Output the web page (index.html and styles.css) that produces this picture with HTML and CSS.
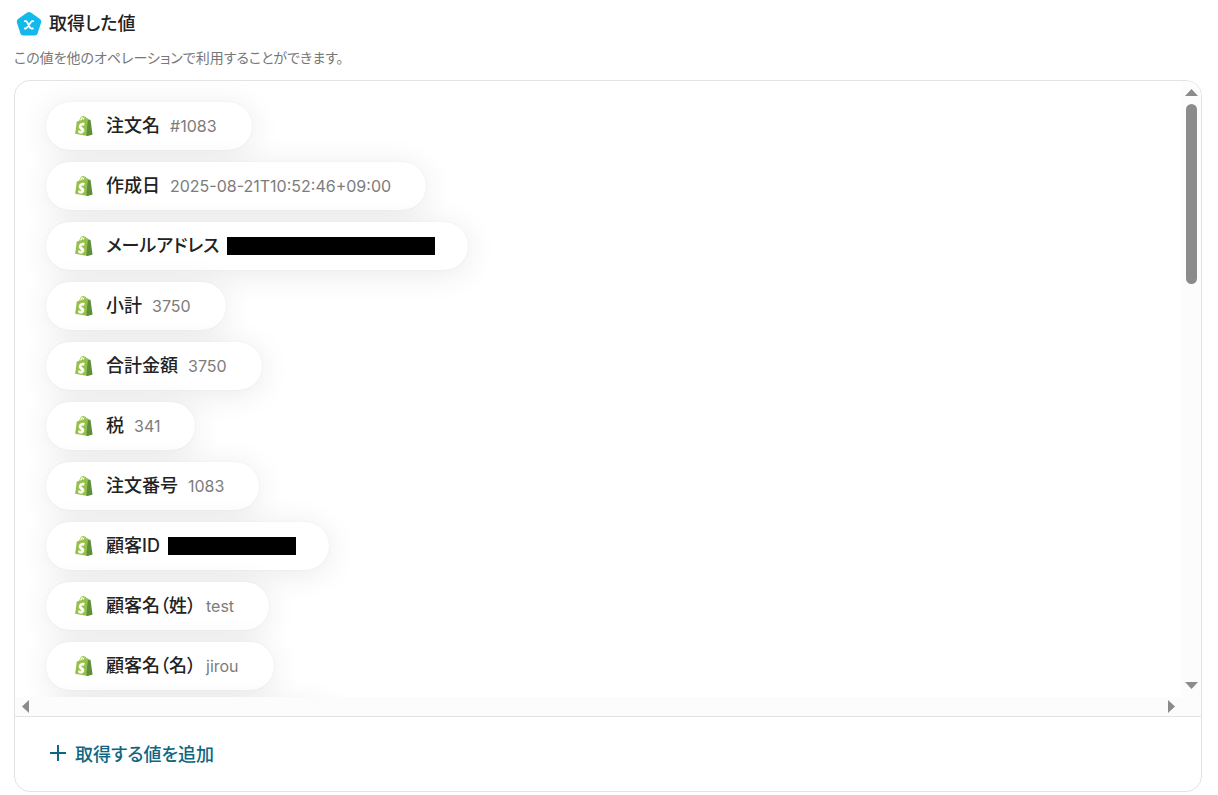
FILE: index.html
```html
<!DOCTYPE html>
<html lang="ja">
<head>
<meta charset="utf-8">
<meta name="viewport" content="width=device-width, initial-scale=1">
<title>取得した値</title>
<link rel="stylesheet" href="styles.css">
</head>
<body>
<svg class="defs" aria-hidden="true">
  <symbol id="bag" viewBox="0 0 110 125">
    <path fill="#95bf47" d="M74.7 14.8s-1.4.4-3.7 1.1c-.4-1.3-1-2.8-1.8-4.4-2.6-5-6.5-7.7-11.1-7.7-.3 0-.6 0-1 .1-.1-.2-.3-.3-.4-.5-2-2.2-4.6-3.2-7.7-3.1-6 .2-12 4.500-16.800 12.200-3.400 5.400-6 12.200-6.800 17.500-6.900 2.100-11.700 3.600-11.800 3.700-3.500 1.100-3.600 1.200-4 4.500C9.300 40.700 0 111.500 0 111.500l78.100 13.100V14.600c-1 0-2.400 0-3.400.2zM57.200 20.200c-4 1.200-8.400 2.600-12.700 3.900 1.200-4.700 3.600-9.400 6.400-12.500 1.100-1.100 2.600-2.400 4.300-3.200 1.700 3.600 2.100 8.500 2 11.800zM49.100 4.300c1.400 0 2.600.3 3.600.9-1.600.8-3.200 2.100-4.700 3.600-3.800 4.100-6.700 10.500-7.900 16.600-3.600 1.100-7.200 2.200-10.500 3.200C31.700 18.800 39.800 4.600 49.100 4.300z"/>
    <path fill="#5e8e3e" d="M70 123l8.100 1.500 31.400-8.400S96 24.800 95.900 24.200c-.1-.6-.6-1-1.100-1s-9.300-.2-9.300-.2-5.400-5.200-7.400-7.200z"/>
    <path fill="#fff" d="M57.200 45.300l-3.800 14.300s-4.300-1.900-9.300-1.600c-7.500.5-7.500 5.200-7.500 6.400.4 6.400 17.300 7.800 18.300 22.900.7 11.900-6.300 20-16.400 20.600-12.200.8-18.900-6.400-18.900-6.400l2.600-11s6.700 5.100 12.100 4.700c3.500-.2 4.800-3.100 4.700-5.100-.5-8.400-14.300-7.900-15.200-21.700-.7-11.600 6.900-23.400 23.700-24.400 6.400-.5 9.700 1.300 9.700 1.300z" stroke="#fff" stroke-width="4"/>
  </symbol>
</svg>
<main class="page">
  <header class="head">
    <h1 class="title">
      <svg class="title-icon" viewBox="0 0 26 26" aria-hidden="true">
        <path fill="#12b9eb" d="M11.200 1.500q1.800-1.100 3.600 0l9.200 6.600q1.700 1.300 1.100 3.400l-3.500 11q-.7 2.100-2.900 2.100H7.300q-2.200 0-2.900-2.100L.9 11.500Q.3 9.400 2 8.100z"/>
        <path fill="none" stroke="#fff" stroke-width="1.800" stroke-linecap="round" stroke-linejoin="round" d="M8.800 10.200h1q.8 0 1.200.8l3 5.600q.5.9 1.300.9h1.500M17.200 10.200h-.7q-.8 0-1.400.8l-4.100 5.600q-.6.9-1.500.9h-.7"/>
      </svg>
      取得した値
    </h1>
    <p class="lead">この値を他のオペレーションで利用することができます。</p>
  </header>
  <section class="panel">
    <div class="scroller">
      <ul class="list">
        <li class="pill"><svg class="bag"><use href="#bag"/></svg><span class="label">注文名</span><span class="value">#1083</span></li>
        <li class="pill"><svg class="bag"><use href="#bag"/></svg><span class="label">作成日</span><span class="value">2025-08-21T10:52:46+09:00</span></li>
        <li class="pill"><svg class="bag"><use href="#bag"/></svg><span class="label">メールアドレス</span><span class="mask mask-mail"></span></li>
        <li class="pill"><svg class="bag"><use href="#bag"/></svg><span class="label">小計</span><span class="value">3750</span></li>
        <li class="pill"><svg class="bag"><use href="#bag"/></svg><span class="label">合計金額</span><span class="value">3750</span></li>
        <li class="pill"><svg class="bag"><use href="#bag"/></svg><span class="label">税</span><span class="value">341</span></li>
        <li class="pill"><svg class="bag"><use href="#bag"/></svg><span class="label">注文番号</span><span class="value">1083</span></li>
        <li class="pill"><svg class="bag"><use href="#bag"/></svg><span class="label">顧客ID</span><span class="mask mask-id"></span></li>
        <li class="pill"><svg class="bag"><use href="#bag"/></svg><span class="label">顧客名（姓）</span><span class="value">test</span></li>
        <li class="pill"><svg class="bag"><use href="#bag"/></svg><span class="label">顧客名（名）</span><span class="value">jirou</span></li>
        <li class="pill pill-next"></li>
      </ul>
      <div class="bar-v" aria-hidden="true">
        <svg class="arrow-v" viewBox="0 0 13 7"><path d="M6.500 0L13 7H0z"/></svg>
        <div class="track"><div class="thumb"></div></div>
        <svg class="arrow-v" viewBox="0 0 13 7"><path d="M0 0h13L6.500 7z"/></svg>
      </div>
      <div class="bar-h" aria-hidden="true">
        <svg class="arrow-h" viewBox="0 0 7 13"><path d="M7 0v13L0 6.500z"/></svg>
        <svg class="arrow-h" viewBox="0 0 7 13"><path d="M0 0l7 6.500L0 13z"/></svg>
      </div>
    </div>
    <footer class="foot">
      <button class="add" type="button">
        <svg class="plus" viewBox="0 0 16 16" aria-hidden="true"><path d="M8 0v16M0 8h16"/></svg>
        取得する値を追加
      </button>
    </footer>
  </section>
</main>
</body>
</html>
```
FILE: styles.css
```css
* {
  box-sizing: border-box;
}

body {
  margin: 0;
  background: #fff;
  color: #222;
  font-family: Inter, "Noto Sans CJK JP", sans-serif;
  font-feature-settings: "palt";
}

.defs {
  display: none;
}

.page {
  display: flex;
  flex-direction: column;
  height: 100vh;
  padding: 8px 16px 3px 14px;
}

.head {
  padding-bottom: 12px;
}

.title {
  display: flex;
  align-items: center;
  gap: 7px;
  margin: 0;
  padding-left: 2px;
  font-size: 18px;
  font-weight: 500;
  line-height: 32px;
}

.title-icon {
  width: 26px;
  height: 26px;
}

.lead {
  margin: 8px 0 0;
  color: #777;
  font-size: 14px;
  line-height: 20px;
}

.panel {
  display: flex;
  flex: 1;
  flex-direction: column;
  min-height: 0;
  overflow: hidden;
  border: 1px solid #e3e3e3;
  border-radius: 16px;
}

.scroller {
  display: grid;
  flex: 1;
  grid-template: minmax(0, 1fr) 19px / minmax(0, 1fr) 19px;
  min-height: 0;
}

.list {
  display: flex;
  flex-direction: column;
  align-items: flex-start;
  gap: 12px;
  margin: 0;
  padding: 21px 31px 0;
  overflow: hidden;
  list-style: none;
}

.pill {
  display: flex;
  flex: none;
  align-items: center;
  height: 48px;
  padding: 0 35px 0 29px;
  border-radius: 24px;
  background: #fff;
  box-shadow: 0 4px 32px rgba(0, 0, 0, 0.09), 0 0 2px rgba(0, 0, 0, 0.06);
  white-space: nowrap;
}

.pill-next {
  width: 290px;
}

.bag {
  width: 18px;
  height: 20px;
  margin-right: 13px;
}

.label {
  font-size: 18px;
  font-weight: 500;
  line-height: 24px;
}

.value {
  margin-left: 10px;
  color: #7c7c7c;
  font-size: 16px;
  line-height: 24px;
}

.mask {
  height: 18px;
  margin: 0 -2px 0 8px;
  background: #000;
}

.mask-mail {
  width: 208px;
}

.mask-id {
  width: 128px;
}

.bar-v {
  display: flex;
  grid-row: 1;
  grid-column: 2;
  flex-direction: column;
  align-items: center;
  gap: 8px;
  padding: 8px 0;
  background: #fcfcfc;
}

.bar-h {
  display: flex;
  grid-row: 2;
  grid-column: 1 / 3;
  align-items: center;
  justify-content: space-between;
  padding: 0 26px 0 7px;
  background: #fcfcfc;
}

.arrow-v {
  width: 13px;
  height: 7px;
  fill: #8b8b8b;
}

.arrow-h {
  width: 7px;
  height: 13px;
  fill: #8b8b8b;
}

.track {
  flex: 1;
  width: 11px;
}

.thumb {
  height: 32%;
  max-height: 180px;
  border-radius: 6px;
  background: #8b8b8b;
}

.foot {
  padding: 16px 35px;
  border-top: 1px solid #e3e3e3;
}

.add {
  display: flex;
  align-items: center;
  gap: 9px;
  height: 40px;
  margin-bottom: 2px;
  padding: 0;
  border: 0;
  background: none;
  color: #0d6783;
  font: inherit;
  font-size: 18px;
  font-weight: 500;
  cursor: pointer;
}

.plus {
  width: 16px;
  height: 16px;
  fill: none;
  stroke: currentColor;
  stroke-width: 2;
}
```
